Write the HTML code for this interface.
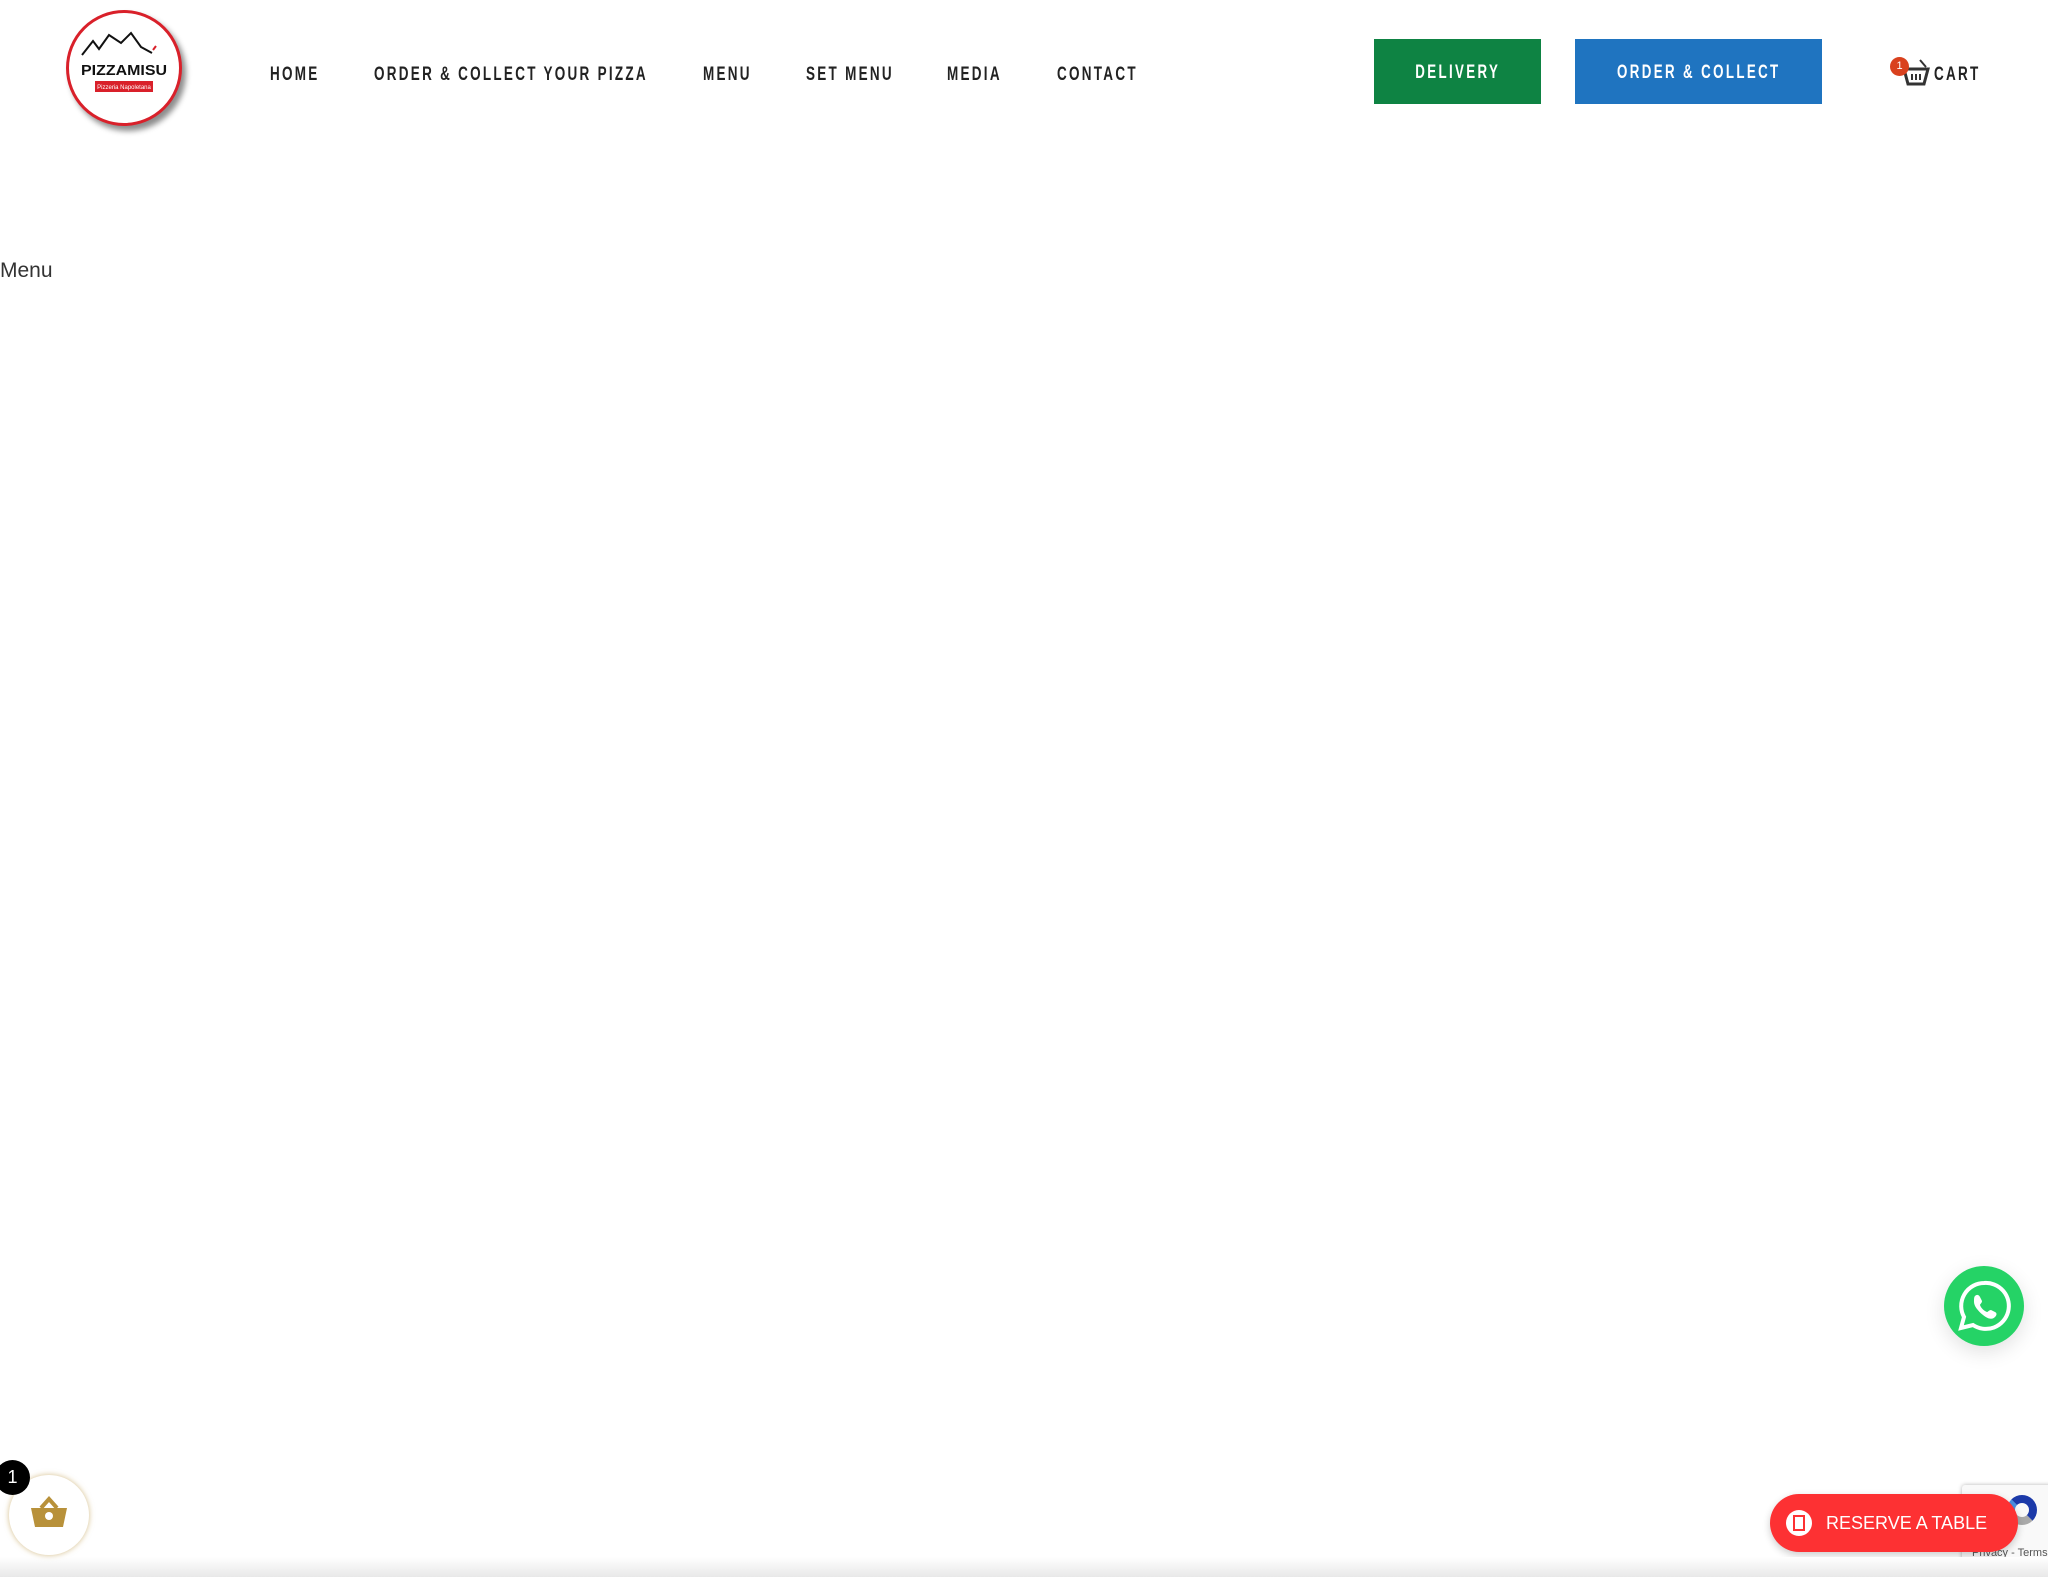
<!DOCTYPE html>
<html><head><meta charset="utf-8"><style>
html,body{margin:0;padding:0;width:2048px;height:1577px;overflow:hidden;background:#fff;position:relative;font-family:"Liberation Sans",sans-serif}
.nav{position:absolute;top:64px;font-size:19px;font-weight:bold;letter-spacing:3.2px;color:#222;transform:scaleX(.71);transform-origin:left top;white-space:nowrap}
.btn{position:absolute;top:39px;height:65px;color:#fff;display:flex;align-items:center;justify-content:center}
.btn span{font-size:19px;font-weight:bold;letter-spacing:3.4px;transform:scaleX(.7);white-space:nowrap;margin-top:3px}
</style></head><body>
<div style="position:absolute;left:66px;top:10px;width:116px;height:116px;border-radius:50%;border:3px solid #d9202a;box-sizing:border-box;background:#fff;box-shadow:4px 5px 6px rgba(0,0,0,.45)">
<svg width="110" height="110" viewBox="0 0 110 110" style="position:absolute;left:0;top:0">
<path d="M13 42 L24 28 L30 36 L40 22 L52 30 L62 20 L72 34 L83 40" fill="none" stroke="#111" stroke-width="2"/>
<path d="M84 37 l3 -4" stroke="#d9202a" stroke-width="2"/>
<text x="55" y="62" text-anchor="middle" font-family="Liberation Sans" font-weight="bold" font-size="15" textLength="86" lengthAdjust="spacingAndGlyphs" fill="#111">PIZZAMISU</text>
<rect x="26" y="68" width="58" height="11" fill="#d9202a"/>
<text x="55" y="76" text-anchor="middle" font-size="6" fill="#fff">Pizzeria Napoletana</text>
</svg></div>
<div class="nav" style="left:270px">HOME</div>
<div class="nav" style="left:374px">ORDER &amp; COLLECT YOUR PIZZA</div>
<div class="nav" style="left:703px">MENU</div>
<div class="nav" style="left:806px">SET MENU</div>
<div class="nav" style="left:947px">MEDIA</div>
<div class="nav" style="left:1057px">CONTACT</div>
<div class="btn" style="left:1374px;width:167px;background:#0e8343"><span>DELIVERY</span></div>
<div class="btn" style="left:1575px;width:247px;background:#1f74c0"><span>ORDER &amp; COLLECT</span></div>
<svg style="position:absolute;left:1900px;top:56px" width="30" height="32" viewBox="0 0 30 32">
<path d="M4 13 H28 L24 28 H8 Z" fill="none" stroke="#333" stroke-width="3"/>
<path d="M12 18v6M16 18v6M20 18v6" stroke="#333" stroke-width="2"/>
<path d="M20 4 L26 11" stroke="#333" stroke-width="2"/>
</svg>
<div style="position:absolute;left:1890px;top:57px;width:19px;height:19px;border-radius:50%;background:#d9411e;color:#fff;font-size:11px;text-align:center;line-height:19px">1</div>
<div class="nav" style="left:1934px;top:64px">CART</div>
<div style="position:absolute;left:0;top:259px;font-size:21px;color:#333">Menu</div>
<div style="position:absolute;left:1944px;top:1266px;width:80px;height:80px;border-radius:50%;background:#25d366;box-shadow:0 6px 20px rgba(0,0,0,.12)">
<svg width="80" height="80" viewBox="0 0 80 80"><path d="M40 17a23 23 0 0 0-20 34l-3 11 12-3a23 23 0 1 0 11-42z" fill="none" stroke="#fff" stroke-width="4"/>
<path d="M31 30c2-2 4-1 5 1l2 4c0 2-2 3-2 4 1 3 4 6 7 7 1 0 2-2 4-2l4 2c2 1 2 3 0 5-3 3-7 2-12-2-5-4-9-9-9-13 0-3 0-5 1-6z" fill="#fff"/></svg></div>
<div style="position:absolute;left:1962px;top:1485px;width:90px;height:80px;background:#f9f9f9;box-shadow:0 0 4px rgba(0,0,0,.3);border-radius:3px">
<div style="position:absolute;left:10px;top:62px;font-size:11px;color:#555">Privacy - Terms</div>
<div style="position:absolute;left:45px;top:10px;width:30px;height:30px;border-radius:50%;border:8px solid #1c3aa9;border-left-color:#4a90e2;border-bottom-color:#aaa;box-sizing:border-box"></div></div>
<div style="position:absolute;left:1770px;top:1494px;width:248px;height:58px;border-radius:29px;background:#fd3133;color:#fff;font-size:18px;display:flex;align-items:center;box-shadow:0 3px 8px rgba(0,0,0,.2)">
<div style="margin-left:16px;width:26px;height:26px;border-radius:50%;background:#fff;position:relative"><div style="position:absolute;left:7px;top:5px;width:12px;height:16px;background:#fd3133"></div><div style="position:absolute;left:9px;top:7px;width:8px;height:12px;background:#fff"></div></div>
<span style="margin-left:14px">RESERVE A TABLE</span></div>
<div style="position:absolute;left:0;top:1557px;width:2048px;height:20px;background:linear-gradient(#fff,#e8e8e8)"></div>
<div style="position:absolute;left:9px;top:1475px;width:80px;height:80px;border-radius:50%;background:#fff;box-shadow:0 0 6px rgba(184,145,58,.6)">
<svg width="80" height="80" viewBox="0 0 80 80"><path d="M22 33H58L54 52H26Z" fill="#b8913a"/><path d="M32 33L40 24L48 33" fill="none" stroke="#b8913a" stroke-width="4"/><circle cx="40" cy="41" r="4" fill="#fff"/></svg></div>
<div style="position:absolute;left:-5px;top:1460px;width:35px;height:35px;border-radius:50%;background:#000;color:#fff;font-size:18px;text-align:center;line-height:35px">1</div>
</body></html>
